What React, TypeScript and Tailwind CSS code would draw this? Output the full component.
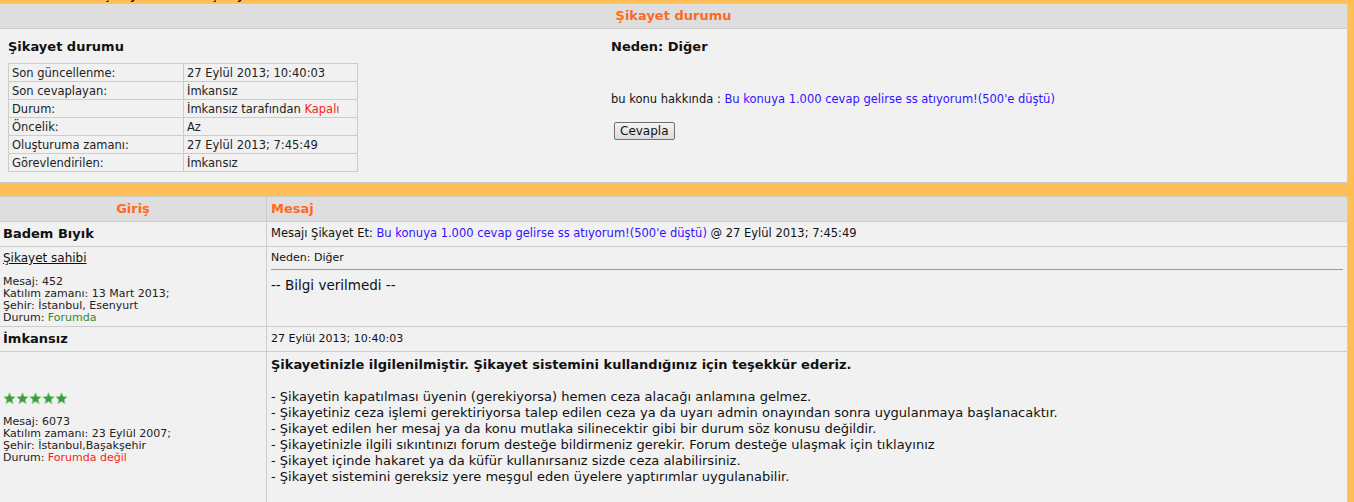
const Star = () => (
  <svg width="13" height="13" viewBox="0 0 24 24" className="block">
    <path
      d="M12 1.5l3.1 6.9 7.4.7-5.6 5 1.7 7.4L12 17.6l-6.6 3.9 1.7-7.4-5.6-5 7.4-.7z"
      fill="#3d9b3d"
      stroke="#8fd08f"
      strokeWidth="1.6"
      strokeLinejoin="round"
    />
  </svg>
);

const infoRows: [string, React.ReactNode][] = [
  ["Son güncellenme:", "27 Eylül 2013; 10:40:03"],
  ["Son cevaplayan:", "İmkansız"],
  [
    "Durum:",
    <>
      İmkansız tarafından <span className="text-[#ff1a1a]">Kapalı</span>
    </>,
  ],
  ["Öncelik:", "Az"],
  ["Oluşturuma zamanı:", "27 Eylül 2013; 7:45:49"],
  ["Görevlendirilen:", "İmkansız"],
];

const rules = [
  "- Şikayetin kapatılması üyenin (gerekiyorsa) hemen ceza alacağı anlamına gelmez.",
  "- Şikayetiniz ceza işlemi gerektiriyorsa talep edilen ceza ya da uyarı admin onayından sonra uygulanmaya başlanacaktır.",
  "- Şikayet edilen her mesaj ya da konu mutlaka silinecektir gibi bir durum söz konusu değildir.",
  "- Şikayetinizle ilgili sıkıntınızı forum desteğe bildirmeniz gerekir. Forum desteğe ulaşmak için tıklayınız",
  "- Şikayet içinde hakaret ya da küfür kullanırsanız sizde ceza alabilirsiniz.",
  "- Şikayet sistemini gereksiz yere meşgul eden üyelere yaptırımlar uygulanabilir.",
];

export default function App() {
  return (
    <div className="min-h-screen bg-[#ffbf57] font-['DejaVu_Sans','Liberation_Sans',sans-serif] text-[#111]">
      {/* breadcrumb, mostly scrolled off the top */}
      <div className="h-[3px] overflow-hidden">
        <div className="-mt-[10px] text-[11px] font-bold leading-[13px] whitespace-nowrap">
          Tüm forumlar : : Şikayet listesi : : Şikayet durumu
        </div>
      </div>

      {/* status panel */}
      <div className="mr-[6px] border border-l-0 border-[#ccc] bg-[#f1f1f1]">
        <div className="flex h-[25px] items-center justify-center border-b border-[#ccc] bg-[#dedede] text-[13px] font-bold text-[#ff6a22]">
          Şikayet durumu
        </div>
        <div className="grid h-[153px] grid-cols-[611px_1fr]">
          <div className="pl-[8px] pt-[10px]">
            <h3 className="text-[13px] font-bold leading-[16px]">Şikayet durumu</h3>
            <table className="mt-[8px] w-[350px] border-collapse text-[11.5px] text-[#222]">
              <tbody>
                {infoRows.map(([k, v]) => (
                  <tr key={k} className="h-[18px]">
                    <td className="w-[175px] border border-[#ccc] px-[3px] leading-[16px]">{k}</td>
                    <td className="border border-[#ccc] px-[3px] leading-[16px]">{v}</td>
                  </tr>
                ))}
              </tbody>
            </table>
          </div>
          <div className="pt-[10px]">
            <h3 className="text-[13px] font-bold leading-[16px]">Neden: Diğer</h3>
            <p className="mt-[36px] text-[11.5px] leading-[16px]">
              bu konu hakkında :{" "}
              <span className="text-[#3311ff]">Bu konuya 1.000 cevap gelirse ss atıyorum!(500'e düştü)</span>
            </p>
            <button className="ml-[3px] mt-[15px] h-[18px] rounded-[2px] border border-[#707070] bg-gradient-to-b from-[#f4f4f4] to-[#dcdcdc] px-[5px] text-[12px] leading-[14px] text-[#111]">
              Cevapla
            </button>
          </div>
        </div>
      </div>

      {/* messages panel */}
      <div className="mr-[6px] mt-[13px] border border-l-0 border-b-0 border-[#ccc] bg-[#f1f1f1]">
        <div className="grid grid-cols-[267px_1fr]">
          <div className="flex h-[25px] items-center justify-center border-b border-r border-[#ccc] bg-[#dedede] text-[13px] font-bold text-[#ff6a22]">
            Giriş
          </div>
          <div className="flex h-[25px] items-center border-b border-[#ccc] bg-[#dedede] pl-[4px] text-[13px] font-bold text-[#ff6a22]">
            Mesaj
          </div>

          <div className="flex h-[25px] items-center border-b border-r border-[#ccc] pl-[3px] text-[13px] font-bold">
            Badem Bıyık
          </div>
          <div className="flex h-[25px] items-center border-b border-[#ccc] pl-[4px] text-[11.5px]">
            Mesajı Şikayet Et:&nbsp;
            <span className="text-[#3311ff]">Bu konuya 1.000 cevap gelirse ss atıyorum!(500'e düştü)</span>
            &nbsp;@ 27 Eylül 2013; 7:45:49
          </div>

          <div className="h-[80px] border-b border-r border-[#ccc] pl-[3px] pt-[3px]">
            <div className="text-[12px] leading-[16px] underline">Şikayet sahibi</div>
            <div className="mt-[10px] text-[11px] leading-[12px] text-[#222]">
              <div>Mesaj: 452</div>
              <div>Katılım zamanı: 13 Mart 2013;</div>
              <div>Şehir: İstanbul, Esenyurt</div>
              <div>
                Durum: <span className="text-[#2e8b2e]">Forumda</span>
              </div>
            </div>
          </div>
          <div className="h-[80px] border-b border-[#ccc] px-[4px] pt-[4px]">
            <div className="text-[11px] leading-[14px]">Neden: Diğer</div>
            <div className="mt-[4px] border-t border-[#999]" />
            <div className="mt-[7px] text-[13.5px] leading-[16px]">-- Bilgi verilmedi --</div>
          </div>

          <div className="flex h-[25px] items-center border-b border-r border-[#ccc] pl-[3px] text-[13px] font-bold">
            İmkansız
          </div>
          <div className="flex h-[25px] items-center border-b border-[#ccc] pl-[4px] text-[11px]">
            27 Eylül 2013; 10:40:03
          </div>

          <div className="h-[160px] border-r border-[#ccc] pl-[3px] pt-[40px]">
            <div className="flex gap-0">
              <Star />
              <Star />
              <Star />
              <Star />
              <Star />
            </div>
            <div className="mt-[11px] text-[11px] leading-[12px] text-[#222]">
              <div>Mesaj: 6073</div>
              <div>Katılım zamanı: 23 Eylül 2007;</div>
              <div>Şehir: İstanbul,Başakşehir</div>
              <div>
                Durum: <span className="text-[#ff1a1a]">Forumda değil</span>
              </div>
            </div>
          </div>
          <div className="h-[160px] px-[4px] pt-[5px] text-[13px] leading-[16px]">
            <div className="font-bold">
              Şikayetinizle ilgilenilmiştir. Şikayet sistemini kullandığınız için teşekkür ederiz.
            </div>
            <div className="mt-[16px]">
              {rules.map((r) => (
                <div key={r}>{r}</div>
              ))}
            </div>
          </div>
        </div>
      </div>
    </div>
  );
}
